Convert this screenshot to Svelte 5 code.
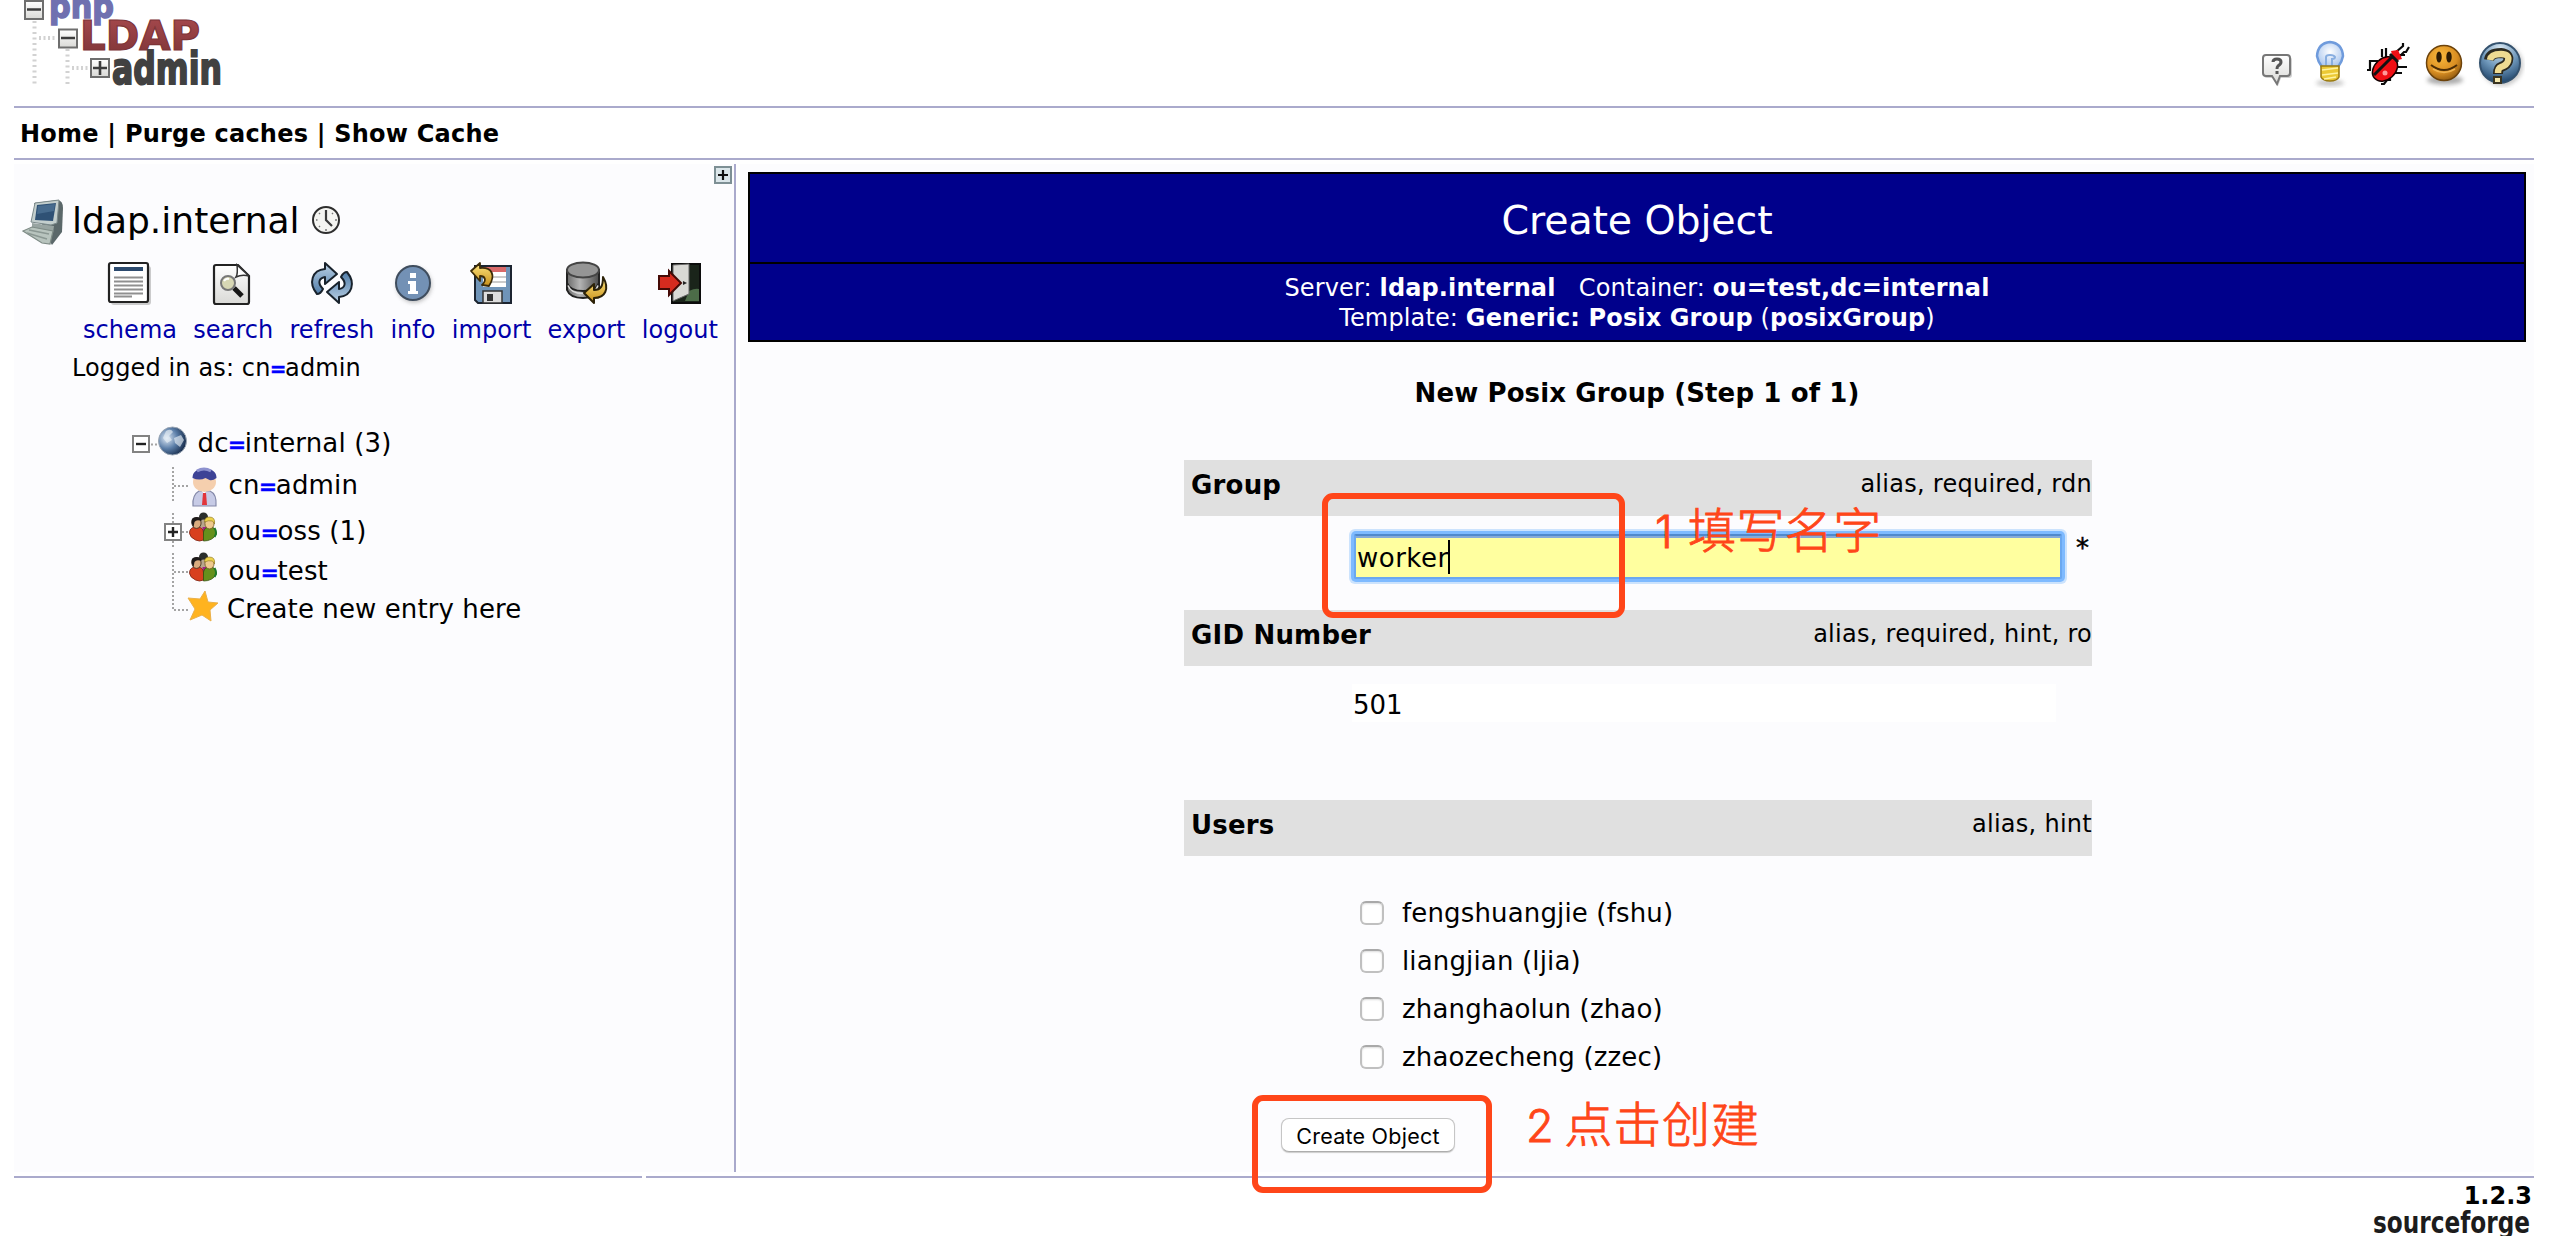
<script>
  let groupName = $state('worker');
  const users = $state([
    { label: 'fengshuangjie (fshu)', checked: false },
    { label: 'liangjian (ljia)', checked: false },
    { label: 'zhanghaolun (zhao)', checked: false },
    { label: 'zhaozecheng (zzec)', checked: false }
  ]);
  const tools = ['schema', 'search', 'refresh', 'info', 'import', 'export', 'logout'];
</script>

{#snippet arrowRefresh()}
  <path d="M6 32C-3 21 1 8 14 7V1l12 11-12 10v-7c-6 1-8 6-2 12-2 4-4 5-6 5z" fill="url(#steel)" stroke="#18222c" stroke-width="2" stroke-linejoin="round" />
{/snippet}

{#snippet people()}
  <circle cx="15" cy="4" r="4.5" fill="#2b2f2c" />
  <path d="M10 8q5-3 10 0v8h-10z" fill="#b9a58c" />
  <path d="M14 14h5l-1 8h-4z" fill="#a3208a" />
  <path d="M1 20q0-5 5-6h4q5 1 5 6v7q-4 2-8 0-6-3-6-7z" fill="#d8401f" stroke="#7c2414" stroke-width=".8" />
  <path d="M15 19q1-5 6-5h3q4 2 4 7-4 7-13 7z" fill="#66901c" stroke="#35500d" stroke-width=".8" />
  <path d="M26 15q3 5 0 9" fill="none" stroke="#1f7a2a" stroke-width="2" />
  <ellipse cx="8" cy="10" rx="4.600" ry="5.400" fill="#d9ab7e" stroke="#3a2a1c" stroke-width=".8" />
  <path d="M3 10q-1-6 5-6 5 0 5 4-5-2-7 1l-1 5z" fill="#1d1a1a" />
  <ellipse cx="21" cy="10.500" rx="4.600" ry="5.400" fill="#efc98e" stroke="#6f5523" stroke-width=".8" />
  <path d="M16 9q0-5 5-5 6 0 5 7l-2-3q-4-1-8 1z" fill="#ecd24c" stroke="#8a701c" stroke-width=".6" />
{/snippet}

{#snippet eq()}<b class="eq">=</b>{/snippet}

<svg class="defs" width="0" height="0" aria-hidden="true">
  <defs>
    <linearGradient id="steel" x1="0" y1="0" x2="0" y2="1"><stop offset="0" stop-color="#bcd2e6" /><stop offset="1" stop-color="#4f7ca8" /></linearGradient>
    <linearGradient id="gold" x1="0" y1="0" x2="0" y2="1"><stop offset="0" stop-color="#ffe680" /><stop offset="1" stop-color="#c8901a" /></linearGradient>
    <linearGradient id="grey" x1="0" y1="0" x2="0" y2="1"><stop offset="0" stop-color="#ffffff" /><stop offset="1" stop-color="#d9d9d6" /></linearGradient>
    <linearGradient id="disk" x1="0" y1="0" x2="1" y2="0"><stop offset="0" stop-color="#6b6b6b" /><stop offset=".4" stop-color="#b4b4b4" /><stop offset="1" stop-color="#4b4b4b" /></linearGradient>
    <linearGradient id="ldapred" x1="0" y1="0" x2="0" y2="1"><stop offset="0" stop-color="#a84a4e" /><stop offset="1" stop-color="#7d3437" /></linearGradient>
    <radialGradient id="smile" cx=".4" cy=".3" r=".8"><stop offset="0" stop-color="#f9b83c" /><stop offset=".6" stop-color="#d98e22" /><stop offset="1" stop-color="#7d4c0c" /></radialGradient>
    <radialGradient id="orb" cx=".5" cy=".15" r=".9"><stop offset="0" stop-color="#dbe9f3" /><stop offset=".5" stop-color="#6f98bb" /><stop offset="1" stop-color="#153a60" /></radialGradient>
    <radialGradient id="globe" cx=".3" cy=".4" r=".75"><stop offset="0" stop-color="#dfeaf6" /><stop offset=".5" stop-color="#5b7ea8" /><stop offset="1" stop-color="#0e2140" /></radialGradient>
    <radialGradient id="bulb" cx=".5" cy=".4" r=".6"><stop offset="0" stop-color="#ffffff" /><stop offset="1" stop-color="#a9c6ee" /></radialGradient>
    <filter id="soft" x="-20%" y="-50%" width="140%" height="200%"><feGaussianBlur stdDeviation="2" /></filter>
  </defs>
</svg>

<div class="page">
  <header>
    <svg class="logo" width="220" height="90" viewBox="0 0 220 90">
      <g stroke="#d2d2d2" stroke-width="4" stroke-dasharray="2 3.500" fill="none">
        <path d="M20.500 21v66M53.500 49v38" /><path d="M25 38h18M58 68h17" stroke-dasharray="2 2.500" />
      </g>
      <g fill="url(#grey)" stroke="#6e6e6e" stroke-width="2">
        <rect x="11" y="1" width="18" height="18" /><rect x="45" y="29.500" width="18" height="18" /><rect x="77" y="59" width="18" height="18" />
      </g>
      <path d="M13 9.500h14M47 38h14M79 68h14M86 61v14" stroke="#3c3c3c" stroke-width="2.600" />
      <text class="php" x="35" y="18" textLength="65" lengthAdjust="spacingAndGlyphs">php</text>
      <text class="ldap" x="66" y="50" textLength="120" lengthAdjust="spacingAndGlyphs">LDAP</text>
      <text class="admin" x="98" y="84" textLength="110" lengthAdjust="spacingAndGlyphs">admin</text>
    </svg>
    <div class="links">
      <svg width="48" height="48" viewBox="0 0 48 48">
        <path d="M12 17h22q3 0 3 3v15q0 3-3 3h-8l-3 8-5-8h-6q-3 0-3-3v-15q0-3 3-3z" fill="#999" opacity=".45" />
        <path d="M11 15h21q3 0 3 3v15q0 3-3 3h-7l-3 8-5-8h-6q-3 0-3-3v-15q0-3 3-3z" fill="url(#grey)" stroke="#777" stroke-width="2" />
        <path d="M18 22q0-3 4-3 4 0 4 3 0 2-3 4-1 1-1 3M22 31v3" fill="none" stroke="#555" stroke-width="3" />
      </svg>
      <svg width="48" height="48" viewBox="0 0 48 48">
        <ellipse cx="24" cy="43" rx="14" ry="3" fill="#999" opacity=".6" filter="url(#soft)" />
        <path d="M16 27q-4-5-5-11Q12 3 24 2q12 1 13 14-1 6-5 11z" fill="url(#bulb)" stroke="#6f9bdc" stroke-width="2.500" />
        <path d="M20 26V17q0-2 4-2t5 2q0 2-3 2v7" fill="none" stroke="#88aee0" stroke-width="2" />
        <path d="M15 26h18v11q-2 4-9 4t-9-4z" fill="#ecc935" stroke="#9b7b12" stroke-width="1.500" />
        <path d="M16 30l16-2M16 35l16-2M18 39l12-2" stroke="#fff3a0" stroke-width="1.500" />
      </svg>
      <svg width="48" height="48" viewBox="0 0 48 48">
        <g fill="none" stroke="#0b0b0b" stroke-width="2.200"><path d="M33 12l7-6V3M36 17l5-5h2l3-5M36 15h6M19 17V9M23 17V8M15 21H7v9M8 30H4M32 27h12M31 33h8M27 37v3h-3l-3 4h-3" /></g>
        <ellipse cx="22" cy="29" rx="14" ry="10.500" transform="rotate(-42 22 29)" fill="#f00f14" stroke="#160000" stroke-width="1.500" />
        <path d="M28 11l7-1 4 9-8 2z" fill="#f01015" />
        <path d="M11 35l19-19M27 14l8 8" stroke="#111" stroke-width="3" />
        <circle cx="22" cy="33" r="2.500" fill="#ff9a9a" />
      </svg>
      <svg width="48" height="48" viewBox="0 0 48 48">
        <ellipse cx="25" cy="40" rx="18" ry="4.500" fill="#888" opacity=".7" filter="url(#soft)" />
        <circle cx="24" cy="23" r="17.500" fill="url(#smile)" stroke="#6d430b" stroke-width="1.500" />
        <ellipse cx="19" cy="17" rx="2.700" ry="5.500" fill="#2d1c05" /><ellipse cx="29" cy="17" rx="2.700" ry="5.500" fill="#2d1c05" />
        <path d="M11 25q13 10 26 0" fill="none" stroke="#4c2d06" stroke-width="2" /><path d="M13 29q11 7 22 0" fill="none" stroke="#f0b552" stroke-width="1.500" />
      </svg>
      <svg width="48" height="48" viewBox="0 0 48 48">
        <circle cx="25" cy="25" r="21" fill="#777" opacity=".4" filter="url(#soft)" />
        <circle cx="23" cy="23" r="20" fill="url(#orb)" stroke="#34526e" stroke-width="2" />
        <path d="M12 20q1-7 12-7 9 1 7 8-1 4-7 6-3 1-3 7" fill="none" stroke="#2c2a20" stroke-width="10" /><path d="M13 20q1-6 11-6 9 0 7 7-1 4-7 6-3 1-3 6" fill="none" stroke="#eedb92" stroke-width="6.500" />
        <rect x="17" y="37" width="7" height="6" fill="#f5e9ae" stroke="#3a3420" stroke-width="2" />
      </svg>
    </div>
  </header>

  <nav>Home | Purge caches | Show Cache</nav>

  <div class="body">
    <aside>
      <svg class="expand" width="18" height="18" viewBox="0 0 18 18"><rect x="1" y="1" width="16" height="16" fill="#dbe6ea" stroke="#7d8f94" stroke-width="2" /><path d="M4 9h10M9 4v10" stroke="#111" stroke-width="2.200" /></svg>
      <div class="server">
        <svg width="48" height="48" viewBox="0 0 48 48">
          <path d="M13 5l24-3q5 1 5 8l-1 24-10 13-6-10z" fill="#5b686a" />
          <path d="M14 5l24-3-2 23-6 2-20-3z" fill="#c3cecd" stroke="#7b898a" stroke-width="1" />
          <path d="M16 7l19-2-3 18-18-1z" fill="#2f5175" /><path d="M17 8l17-2-1 7-17 3z" fill="#476b8e" />
          <path d="M11 25l22 3-1 7-21-4z" fill="#98a4a1" />
          <path d="M2 33l9-4 21 4-3 13-8-1z" fill="#b8c4be" stroke="#7f8c87" stroke-width="1.200" /><path d="M8 32l20 4M6 35l20 6" stroke="#8b9893" stroke-width="1.500" />
        </svg>
        <span>ldap.internal</span>
        <svg class="clock" width="30" height="30" viewBox="0 0 30 30"><circle cx="15" cy="15" r="13" fill="#f4f4f1" stroke="#2e2e2e" stroke-width="2" /><path d="M15 5v10l6 6" fill="none" stroke="#3a3a3a" stroke-width="2.200" /><path d="M15 24v2M5 15h1.500M24 15h2M8 8l1 1M22 8l-1 1M8 22l1-1" stroke="#777" stroke-width="1.500" /></svg>
      </div>

      <div class="tools">
        {#each tools as tool}
          <a class="tool">
            <svg width="42" height="44" viewBox="0 0 42 44">
              {#if tool === 'schema'}
                <rect x="2" y="4" width="40" height="39" rx="3" fill="#999" opacity=".5" />
                <rect x="0" y="1" width="39" height="39" rx="2" fill="#fff" stroke="#222" stroke-width="2.200" />
                <path d="M5 7h29" stroke="#2c4a6e" stroke-width="4" /><path d="M5 15.500h29M5 19.500h29M5 23.500h29M5 27.500h29M5 31.500h29M5 34.500h18" stroke="#8f8f8f" stroke-width="1.800" />
              {:else if tool === 'search'}
                <path d="M5 3h21l11 11v26q0 2-2 2H4q-2 0-2-2V5q0-2 2-2z" fill="url(#grey)" stroke="#222" stroke-width="2.200" />
                <path d="M25 3q1 9-1 12 6-3 13-1z" fill="#fff" stroke="#333" stroke-width="1.500" />
                <path d="M22 26l8 8" stroke="#161616" stroke-width="5" /><circle cx="16" cy="21" r="7" fill="#d7d7b4" stroke="#777" stroke-width="2" /><path d="M12 19q2-3 5-2" stroke="#fff" stroke-width="2" fill="none" />
              {:else if tool === 'refresh'}
                {@render arrowRefresh()}
                <g transform="rotate(180 21 21)">{@render arrowRefresh()}</g>
              {:else if tool === 'info'}
                <circle cx="22" cy="23" r="17.500" fill="#777" opacity=".5" filter="url(#soft)" />
                <circle cx="21" cy="21" r="17" fill="#7391b5" stroke="#3f4d5e" stroke-width="2" />
                <path d="M18 11h6v5h-6zM16 19h8v10h2v3H16v-3h2v-7h-2z" fill="#fff" />
              {:else if tool === 'import'}
                <path d="M4 4h36v37H7l-3-3z" fill="#6f94b8" stroke="#1c2430" stroke-width="2" />
                <path d="M12 5h23v20H12z" fill="#fff" /><path d="M12 5h23v5H12z" fill="#d96a6a" /><path d="M13 15h22M13 20h22" stroke="#bbb" stroke-width="1.500" />
                <rect x="12" y="29" width="19" height="12" fill="#ddd" stroke="#333" stroke-width="1.500" /><rect x="16" y="32" width="6" height="7" fill="#333" />
                <path d="M0 9L9 1v5c12-1 16 7 9 18l-7-1c5-5 3-9-2-9v5z" fill="url(#gold)" stroke="#3c2b08" stroke-width="1.800" stroke-linejoin="round" />
              {:else if tool === 'export'}
                <path d="M1 8v20q3 8 16 8t16-8V8z" fill="url(#disk)" stroke="#222" stroke-width="2" />
                <path d="M1 21q3 8 16 8t16-8" fill="none" stroke="#222" stroke-width="2" /><path d="M2 23.500q3 8 15 8 13 0 15-8" fill="none" stroke="#ddd" stroke-width="1.500" />
                <ellipse cx="17" cy="8" rx="16" ry="7.500" fill="#959595" stroke="#444" stroke-width="2" />
                <path d="M37 15c7 12 2 21-9 21v5L18 31l10-9v6c7 0 9-4 9-13z" fill="url(#gold)" stroke="#2c2208" stroke-width="2" stroke-linejoin="round" />
              {:else}
                <rect x="13" y="2" width="28" height="39" fill="#1a241a" stroke="#0c0c0c" stroke-width="2" /><path d="M26 39l4-10q6-3 10-2v12z" fill="#4c6c48" />
                <path d="M14 3l16-1v30l-16 7z" fill="#d9d9d5" stroke="#666" stroke-width="1" /><path d="M24 19l4 2-4 2z" fill="#222" />
                <path d="M0 14h10V9l12 12-12 12v-6H0z" fill="#d62b1f" stroke="#450a06" stroke-width="2" />
              {/if}
            </svg>
            <span>{tool}</span>
          </a>
        {/each}
      </div>

      <div class="logged">Logged in as: cn{@render eq()}admin</div>

      <ul class="tree">
        <li class="r1">
          <svg width="60" height="42" viewBox="0 0 60 42">
            <path d="M22 23.500h8" class="dots" /><rect x="4" y="15" width="16" height="16" class="box" /><path d="M7 23h10" class="sign" />
            <circle cx="43.500" cy="20" r="14" fill="url(#globe)" stroke="#9aa6b4" stroke-width="1" />
            <path d="M37 10q5-3 7 1l-4 4 3 4-5 3-4-5zM45 17l7-3 3 5-4 7-5-4z" fill="#e7eef5" opacity=".65" />
          </svg>
          <span>dc{@render eq()}internal (3)</span>
        </li>
        <li class="r2">
          <svg width="60" height="42" viewBox="0 0 60 42">
            <path d="M13 4v36M14 23h15" class="dots" />
            <path d="M33 43q-1-11 6-15h11q7 3 6 15z" fill="#c7cbe6" stroke="#8388a8" stroke-width="1.200" /><path d="M41 27h6l-3 4z" fill="#fff" /><path d="M43 30h3l1 12h-5z" fill="#e2353b" />
            <ellipse cx="44.500" cy="19" rx="11.500" ry="10" fill="#f5cfae" /><path d="M32.500 15q0-9 12-9.500 12 .5 12 9.500-4 3-7 2l-4-2q-6 3-13 0z" fill="#3d4296" /><path d="M37 8q7-4 14 0" stroke="#8d91cf" stroke-width="3" fill="none" />
          </svg>
          <span>cn{@render eq()}admin</span>
        </li>
        <li class="r3">
          <svg width="60" height="50" viewBox="0 0 60 50">
            <path d="M13 8v35M22 27h8" class="dots" /><rect x="5" y="19" width="16" height="16" class="box" /><path d="M8 27h10M13 22v10" class="sign" />
            <g transform="translate(28.500 8)">{@render people()}</g>
          </svg>
          <span>ou{@render eq()}oss (1)</span>
        </li>
        <li class="r4">
          <svg width="60" height="30" viewBox="0 0 60 30"><path d="M13-2v35M14 17h15" class="dots" /><g transform="translate(28.500 -2)">{@render people()}</g></svg>
          <span>ou{@render eq()}test</span>
        </li>
        <li class="r5">
          <svg width="60" height="46" viewBox="0 0 60 46"><path d="M13 6v19M14 25h15" class="dots" /><path d="M45 6l3 11 10 1-8 7 1 11-9-6-12 5 5-11-7-11 12 1z" fill="#ffb31f" stroke="#eab04a" stroke-width="1" /></svg>
          <span>Create new entry here</span>
        </li>
      </ul>
    </aside>

    <main>
      <div class="banner">
        <h1>Create Object</h1>
        <p>Server: <b>ldap.internal</b>&nbsp;&nbsp; Container: <b>ou=test,dc=internal</b><br />Template: <b>Generic: Posix Group</b> (<b>posixGroup</b>)</p>
      </div>
      <h2>New Posix Group (Step 1 of 1)</h2>
      <form>
        <div class="head"><b>Group</b><span>alias, required, rdn</span></div>
        <div class="row group">
          <div class="field">{groupName}<i class="caret"></i></div>
          <span class="star">*</span>
        </div>
        <div class="head"><b>GID Number</b><span>alias, required, hint, ro</span></div>
        <div class="row gid"><div class="plain">501</div></div>
        <div class="head"><b>Users</b><span>alias, hint</span></div>
        <div class="users">
          {#each users as user}
            <label><input type="checkbox" bind:checked={user.checked} />{user.label}</label>
          {/each}
        </div>
        <button type="button">Create Object</button>
      </form>
    </main>
  </div>

  <footer>
    <div class="rule"><span></span><span></span></div>
    <b class="version">1.2.3</b>
    <svg class="sf" width="160" height="22" viewBox="0 0 160 22"><text x="2" y="18" textLength="157" lengthAdjust="spacingAndGlyphs">sourceforge</text></svg>
  </footer>

  <div class="mark mark1"></div>
  <div class="mark mark2"></div>
  <div class="note note1"><span>1</span> 填写名字</div>
  <div class="note note2"><span>2</span> 点击创建</div>
</div>

<style>
  :global(body) { background: #fff; overflow: hidden; }
  .defs { position: absolute; }
  .page { position: relative; box-sizing: border-box; width: 2554px; height: 1236px; padding: 0 20px 0 14px; overflow: hidden; display: flex; flex-direction: column; font-family: "DejaVu Sans", Verdana, sans-serif; font-size: 24px; color: #000; }
  header { height: 106px; flex: none; border-bottom: 2px solid #aaaacc; display: flex; justify-content: space-between; }
  .logo { display: block; }
  .logo text { font-weight: 700; }
  .php { font-size: 34px; fill: #7070b0; stroke: #7070b0; stroke-width: 1.5; }
  .ldap { font-size: 40px; fill: url(#ldapred); stroke: #7d3437; stroke-width: 1.2; }
  .admin { font-size: 44px; fill: #414141; stroke: #414141; stroke-width: 2; }
  .links { display: flex; padding: 40px 9px 0 0; gap: 9px; }
  .links svg:first-child { margin-right: -6px; }
  nav { height: 50px; flex: none; line-height: 53px; padding-left: 6px; border-bottom: 2px solid #aaaacc; font-weight: 700; letter-spacing: .22px; white-space: pre; }
  .body { display: flex; margin-top: 4px; height: 1008px; flex: none; }
  aside { position: relative; width: 720px; flex: none; background: #fcfcfe; border-right: 2px solid #aaaacc; }
  .expand { position: absolute; top: 2px; right: 2px; }
  .server { display: flex; align-items: center; height: 48px; margin: 34px 0 0 7px; font-size: 36px; letter-spacing: .02px; }
  .server span { line-height: 48px; margin: -2px 0 0 3px; }
  .clock { margin: -5px 0 0 11px; }
  .tools { display: flex; gap: 16.2px; margin: 16px 0 0 69px; color: #0000aa; letter-spacing: .05px; }
  .tool { display: flex; flex-direction: column; align-items: center; }
  .tool svg { display: block; overflow: visible; }
  .tool span { line-height: 30px; margin-top: 9px; }
  .logged { margin: 8px 0 0 58px; line-height: 30px; letter-spacing: .12px; white-space: pre; }
  .eq { color: #0000ff; font-size: 22px; font-weight: 700; letter-spacing: -1.4px; margin-left: -.8px; line-height: 1; -webkit-text-stroke: .3px #0000ff; }
  .logged .eq { font-size: 20px; letter-spacing: -1.4px; }
  .tree { list-style: none; margin: 38px 0 0; padding: 0; font-size: 26px; letter-spacing: .15px; }
  .tree li { display: flex; height: 42px; line-height: 44px; padding-left: 146px; }
  .tree li svg { overflow: visible; flex: none; }
  .tree li span { margin-left: 8.5px; white-space: pre; }
  .tree .r1 { padding-left: 115px; }
  .tree .r3 { height: 50px; line-height: 52px; }
  .tree .r4 { height: 30px; line-height: 32px; }
  .tree .r5 { height: 46px; line-height: 48px; }
  .tree .r5 span { margin-left: 7px; letter-spacing: .1px; }
  .dots { fill: none; stroke: #a4a4a4; stroke-width: 2; stroke-dasharray: 2 2; }
  .box { fill: #fff; stroke: #828282; stroke-width: 2; }
  .sign { stroke: #222; stroke-width: 2.4; }
  main { flex: 1; margin-left: 4px; padding: 8px 8px 0; background: #fcfcfe; }
  .banner { border: 2px solid #000; background: #00008b; color: #fff; text-align: center; }
  h1 { margin: 0; height: 88px; box-sizing: content-box; line-height: 92px; font-size: 39.5px; font-weight: 400; letter-spacing: -.1px; border-bottom: 2px solid #000; }
  p { margin: 0; height: 67px; padding-top: 9px; line-height: 30px; letter-spacing: .13px; }
  h2 { margin: 31px 0 47px; font-size: 26px; line-height: 40px; text-align: center; letter-spacing: .12px; }
  form { width: 908px; margin-left: 436px; font-size: 26px; }
  .head { display: flex; justify-content: space-between; height: 56px; background: #e0e0e0; line-height: 51px; padding-left: 7px; }
  .head b { letter-spacing: .2px; }
  .head span { font-size: 24px; line-height: 49px; letter-spacing: .27px; }
  .row { display: flex; box-sizing: border-box; }
  .group { height: 94px; padding: 18px 0 0 170px; }
  .field { position: relative; box-sizing: border-box; width: 708px; height: 45px; border: 2px solid #6ba8f0; border-top-color: #5089cc; background: #ffff9f; box-shadow: inset 0 2px 0 #86aad8, 0 0 0 3px #7ebaff, 0 0 0 5px #cce3fd; border-radius: 2px; line-height: 45px; letter-spacing: .5px; padding-left: 1px; }
  .caret { display: inline-block; width: 2px; height: 34px; margin-left: -1px; background: #000; vertical-align: -7px; }
  .star { margin-left: 14px; line-height: 29px; -webkit-text-stroke: .5px #000; }
  .gid { height: 134px; padding: 18px 0 0 168px; }
  .plain { box-sizing: border-box; width: 704px; height: 38px; line-height: 42px; padding-left: 1px; background: #fff; }
  .users { padding: 33px 0 0 176px; }
  label { display: flex; align-items: center; height: 48px; letter-spacing: .15px; }
  label input { appearance: none; box-sizing: border-box; width: 24px; height: 24px; margin: 0 18px 0 0; border: 2px solid #c0c0c0; border-top-color: #a9a9a9; border-radius: 6px; background: #fff; box-shadow: inset 0 1px 2px #ddd; }
  button { display: block; box-sizing: border-box; width: 174px; height: 34px; margin: 37px 0 0 97px; padding: 1px 0 0; border: 1px solid #c6c6c6; border-bottom-color: #adadad; border-radius: 8px; background: #fff; box-shadow: 0 1px 1px #ccc; font: 21.500px Inter, sans-serif; color: #000; letter-spacing: .25px; }
  .rule { display: flex; gap: 4px; height: 2px; margin-top: 4px; align-self: stretch; }
  .rule span { background: #aaaacc; width: 628px; }
  .rule span + span { flex: 1; width: auto; }
  footer { display: flex; flex-direction: column; align-items: flex-end; }
  .version { line-height: 30px; margin: 3px 2px 0 0; }
  .sf { margin: 4px 3px 0 0; display: block; overflow: visible; }
  .sf text { font-size: 30px; font-weight: 700; fill: #1c1c1c; }
  .mark { position: absolute; box-sizing: border-box; border: 6px solid #ff4619; border-radius: 11px; }
  .mark1 { left: 1322px; top: 493px; width: 303px; height: 125px; }
  .mark2 { left: 1252px; top: 1095px; width: 240px; height: 98px; }
  .note { position: absolute; color: #ff4619; font: 300 48px/60px "Noto Sans CJK SC", sans-serif; white-space: pre; letter-spacing: .8px; -webkit-text-stroke: .9px #ff4619; }
  .note span { display: inline-block; width: 27px; font: 300 45px/60px Inter, sans-serif; letter-spacing: 0; }
  .note1 { left: 1655px; top: 497px; letter-spacing: .4px; }
  .note1 span { width: 22px; }
  .note2 { left: 1526px; top: 1091px; }
</style>
